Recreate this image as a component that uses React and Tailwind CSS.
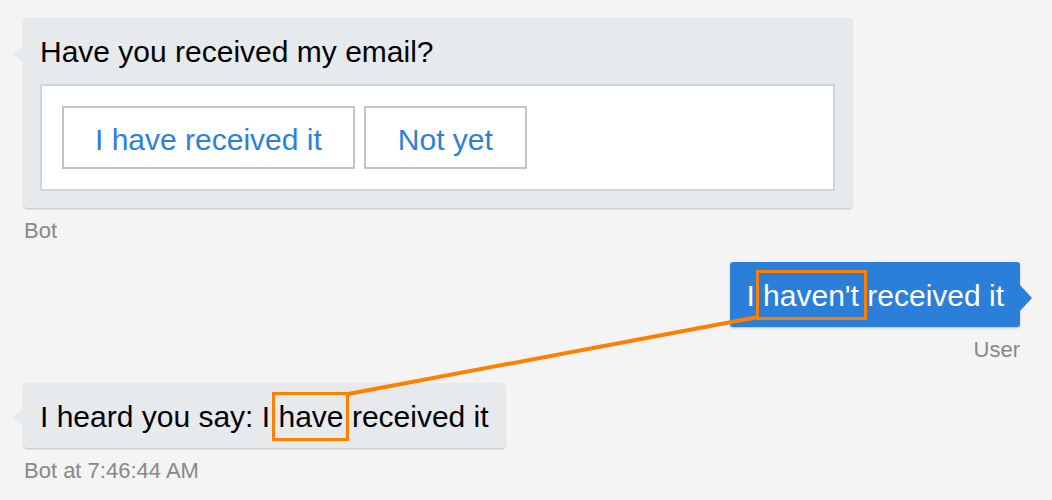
import React from "react";

export default function App() {
  return (
    <div className="relative w-[1052px] h-[500px] overflow-hidden bg-[#f4f4f4] pt-[18px] pl-6 pr-8 font-['Liberation_Sans',Arial,sans-serif]">
      {/* Bot question */}
      <div className="flex flex-col items-start">
        <div className="relative w-[828px] rounded-[3px] bg-[#e7eaed] pl-4 pr-[17px] pt-4 pb-[17px] shadow-[0_1px_2px_rgba(0,0,0,0.22)]">
          <span className="absolute -left-[12px] top-[27px] h-0 w-0 border-y-[9px] border-r-[12px] border-y-transparent border-r-[#e7eaed]" />
          <div className="text-[30px] leading-[35px] text-black">Have you received my email?</div>
          <div className="mt-[15px] flex gap-[9px] border-2 border-[#cad6e2] bg-white p-5">
            <button className="border-2 border-[#c4c4c4] bg-white px-[31px] pt-[14px] pb-[10px] text-[30px] leading-[35px] text-[#2b80db]">
              I have received it
            </button>
            <button className="border-2 border-[#c4c4c4] bg-white px-8 pt-[14px] pb-[10px] text-[30px] leading-[35px] text-[#2b80db]">
              Not yet
            </button>
          </div>
        </div>
        <div className="mt-[10px] text-[22px] leading-[26px] text-[#888888]">Bot</div>
      </div>

      {/* User reply */}
      <div className="mt-[18px] flex flex-col items-end">
        <div className="relative rounded-[3px] bg-[#2c7fd8] px-4 pt-4 pb-[14px] text-[30px] leading-[35px] text-white shadow-[0_1px_2px_rgba(0,0,0,0.22)]">
          <span className="absolute -right-[12px] top-[23px] h-0 w-0 border-y-[13px] border-l-[12px] border-y-transparent border-l-[#2c7fd8]" />
          I{" "}
          <span className="relative">
            haven't
            <span className="absolute -left-[7px] -right-[8px] -top-[9px] -bottom-[8px] border-[3px] border-[#ff8000]" />
          </span>{" "}
          received it
        </div>
        <div className="mt-[10px] text-[22px] leading-[26px] text-[#888888]">User</div>
      </div>

      {/* Bot echo */}
      <div className="mt-[20px] flex flex-col items-start">
        <div className="relative rounded-[3px] bg-[#e7eaed] px-4 pt-4 pb-[14px] text-[30px] leading-[35px] text-black shadow-[0_1px_2px_rgba(0,0,0,0.22)]">
          <span className="absolute -left-[12px] top-[25px] h-0 w-0 border-y-[9px] border-r-[12px] border-y-transparent border-r-[#e7eaed]" />
          I heard you say: I{" "}
          <span className="relative">
            have
            <span className="absolute -left-[6px] -right-[5px] -top-[8px] -bottom-[8px] border-[3px] border-[#ff8000]" />
          </span>{" "}
          received it
        </div>
        <div className="mt-[10px] text-[22px] leading-[26px] text-[#888888]">Bot at 7:46:44 AM</div>
      </div>

      {/* connector line */}
      <svg className="pointer-events-none absolute left-0 top-0" width="1052" height="500">
        <line x1="348" y1="394" x2="758" y2="317" stroke="#ff8000" strokeWidth="4" />
      </svg>
    </div>
  );
}
